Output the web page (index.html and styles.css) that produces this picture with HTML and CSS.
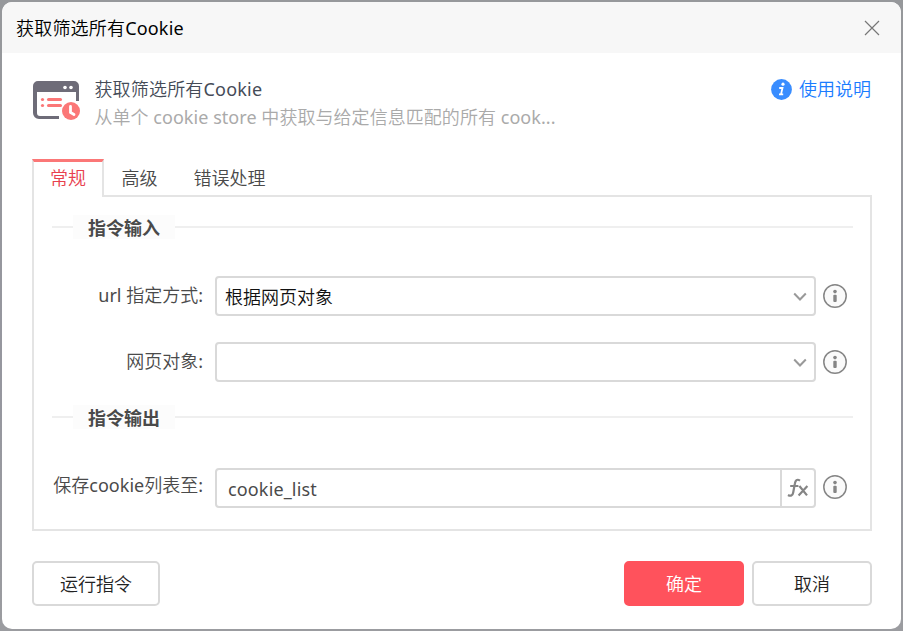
FILE: index.html
```html
<!DOCTYPE html>
<html lang="zh-CN">
<head>
<meta charset="utf-8">
<title>获取筛选所有Cookie</title>
<link rel="stylesheet" href="styles.css">
</head>
<body>
<svg class="defs" width="0" height="0">
  <symbol id="info" viewBox="0 0 24 24">
    <circle cx="12" cy="12" r="11.2" fill="#fafafa" stroke="#858585" stroke-width="1.5"/>
    <circle cx="12" cy="7.6" r="1.8" fill="#858585"/>
    <rect x="10.3" y="10.7" width="3.4" height="7.3" rx="1" fill="#858585"/>
  </symbol>
  <symbol id="chevron" viewBox="0 0 14 10">
    <path d="M1.2 1.5 7 7.5l5.8-6" fill="none" stroke="#999" stroke-width="2"/>
  </symbol>
</svg>
<div class="dialog">
  <header class="titlebar">
    <span class="title">获取筛选所有Cookie</span>
    <svg class="close" width="16" height="16" viewBox="0 0 16 16"><path d="M1 1l14 14M15 1 1 15" stroke="#777" stroke-width="1.2"/></svg>
  </header>
  <section class="intro">
    <svg class="logo" width="48" height="42" viewBox="0 0 48 42">
      <path d="M5 0h36a5 5 0 0 1 5 5v15h-3V11H4v21q0 3 3 3h19v3H6a6 6 0 0 1-6-6V5a5 5 0 0 1 5-5z" fill="#6e6c78"/>
      <circle cx="32" cy="6.5" r="1.8" fill="#fff"/><circle cx="38" cy="6.5" r="1.8" fill="#fff"/>
      <g fill="#fb7777"><circle cx="9.5" cy="18.5" r="1.6"/><circle cx="9.5" cy="24.5" r="1.6"/>
      <rect x="14" y="17" width="15" height="3" rx="1.5"/><rect x="14" y="23" width="15" height="3" rx="1.5"/>
      <circle cx="38" cy="30" r="9"/></g>
      <path d="M37.5 25.5v6l3.5 2" fill="none" stroke="#fff" stroke-width="2.8" stroke-linecap="round"/>
    </svg>
    <div class="intro-text">
      <div class="name">获取筛选所有Cookie</div>
      <div class="desc">从单个 cookie store 中获取与给定信息匹配的所有 cook...</div>
    </div>
    <a class="help">
      <svg width="21" height="21" viewBox="0 0 21 21"><circle cx="10.5" cy="10.5" r="10.4" fill="#398dff"/><circle cx="12" cy="5.2" r="1.6" fill="#fff"/><path d="M8.2 9h3.3l-1.5 6.3h2.2M8 15.3h2" fill="none" stroke="#fff" stroke-width="1.8"/></svg>
      <span>使用说明</span>
    </a>
  </section>
  <nav class="tabs">
    <div class="tab active">常规</div>
    <div class="tab">高级</div>
    <div class="tab">错误处理</div>
  </nav>
  <main class="panel">
    <h2 class="group"><span>指令输入</span></h2>
    <div class="row first">
      <label>url 指定方式:</label>
      <div class="field select"><span>根据网页对象</span><svg width="14" height="10"><use href="#chevron"/></svg></div>
      <svg class="info" width="24" height="24"><use href="#info"/></svg>
    </div>
    <div class="row">
      <label>网页对象:</label>
      <div class="field select"><span></span><svg width="14" height="10"><use href="#chevron"/></svg></div>
      <svg class="info" width="24" height="24"><use href="#info"/></svg>
    </div>
    <h2 class="group output"><span>指令输出</span></h2>
    <div class="row last">
      <label>保存cookie列表至:</label>
      <div class="field variable"><span>cookie_list</span>
        <div class="fx"><svg width="22" height="20" viewBox="0 0 22 20"><path d="M13 2.6C10 .6 8.4 2.4 7.9 5.5L6.2 14.5C5.7 17.6 3.6 18.5 1 17M3.2 8h8.2M12.4 8l7.6 9.4M20.4 8l-8.8 9.4" fill="none" stroke="#858585" stroke-width="2.2"/></svg></div>
      </div>
      <svg class="info" width="24" height="24"><use href="#info"/></svg>
    </div>
  </main>
  <footer class="actions">
    <button class="run">运行指令</button>
    <button class="primary">确定</button>
    <button>取消</button>
  </footer>
</div>
</body>
</html>
```
FILE: styles.css
```css
* { box-sizing: border-box; }
body {
  margin: 0;
  height: 631px;
  padding: 2px;
  overflow: hidden;
  background: linear-gradient(#96989b, #96979f 60%, #9b9ca0);
  font: 400 18px/26px "Noto Sans", "Noto Sans CJK SC DemiLight", "Noto Sans CJK SC", sans-serif;
  color: #4a4a4a;
}
.defs { position: absolute; }
svg { display: block; flex: none; }
.dialog {
  height: 627px;
  border-radius: 10px;
  background: #fff;
  overflow: hidden;
}
.titlebar {
  height: 51px;
  padding: 0 21px 0 14px;
  display: flex;
  align-items: center;
  justify-content: space-between;
  background: #f7f7f7;
  color: #000;
}
.title, .name { letter-spacing: 0.19px; }
.intro {
  height: 106px;
  padding: 23px 30px 0 31px;
  display: flex;
  align-items: flex-start;
}
.logo { margin-top: 5px; }
.intro-text { margin-left: 13.4px; flex: 1; white-space: nowrap; }
.name { color: #454b57; height: 28px; }
.desc { color: #aaa; letter-spacing: 0.05px; }
.help { display: flex; align-items: center; gap: 7px; color: #1a7cff; }
.tabs {
  height: 38px;
  margin-left: 30px;
  display: flex;
  position: relative;
}
.tab { width: 72px; padding: 6px 0 0 17.6px; white-space: nowrap; }
.tab.active {
  padding: 3px 0 0 16px;
  border: 2px solid #e4e4e4;
  border-top: 3px solid #fb7777;
  border-bottom: 0;
  color: #e8404d;
  background: #fff;
}
.panel {
  width: 840px;
  height: 336px;
  margin: -2px 0 0 30px;
  padding: 17px 17px 0 18px;
  border: 2px solid #e4e4e4;
}
.group {
  margin: 0;
  height: 26px;
  display: flex;
  align-items: center;
  font-size: 18px;
  font-family: "Noto Sans", "Noto Sans CJK SC", sans-serif;
  font-weight: 700;
}
.group::before, .group::after { content: ""; height: 2px; background: #efefef; }
.group::before { width: 21px; }
.group::after { flex: 1; }
.group span { width: 102px; height: 24px; line-height: 26px; padding-left: 15px; background: #fcfcfc; }
.row { display: flex; align-items: center; height: 40px; margin-top: 26px; }
.row.first { margin-top: 36px; }
.row.last { margin-top: 38px; }
.group.output { margin-top: 22px; }
label { width: 151px; text-align: right; margin: -2px 12px 0 0; white-space: nowrap; }
.row.last label { margin-top: -6px; }
.field {
  width: 601px;
  height: 40px;
  border: 2px solid #d9d9d9;
  border-radius: 4px;
  display: flex;
  align-items: center;
  justify-content: space-between;
}
.select { padding: 2px 7px 0 8px; color: #111; }
.variable { padding-left: 11px; letter-spacing: 0.15px; }
.variable span { padding-top: 1px; }
.fx { width: 34px; height: 36px; border-left: 2px solid #d9d9d9; display: flex; align-items: center; justify-content: center; }
.info { margin-left: 7px; }
.row.last .info { margin-top: -3px; }
.actions {
  margin: 30px 29px 0 30px;
  display: flex;
  gap: 8px;
}
button {
  width: 120px;
  height: 45px;
  padding: 0;
  border: 2px solid #d9d9d9;
  border-radius: 5px;
  background: #fff;
  color: #222;
  font: inherit;
}
.run { width: 128px; margin-right: auto; }
.primary { background: #ff525c; border-color: #ff525c; color: #fff; }
```
